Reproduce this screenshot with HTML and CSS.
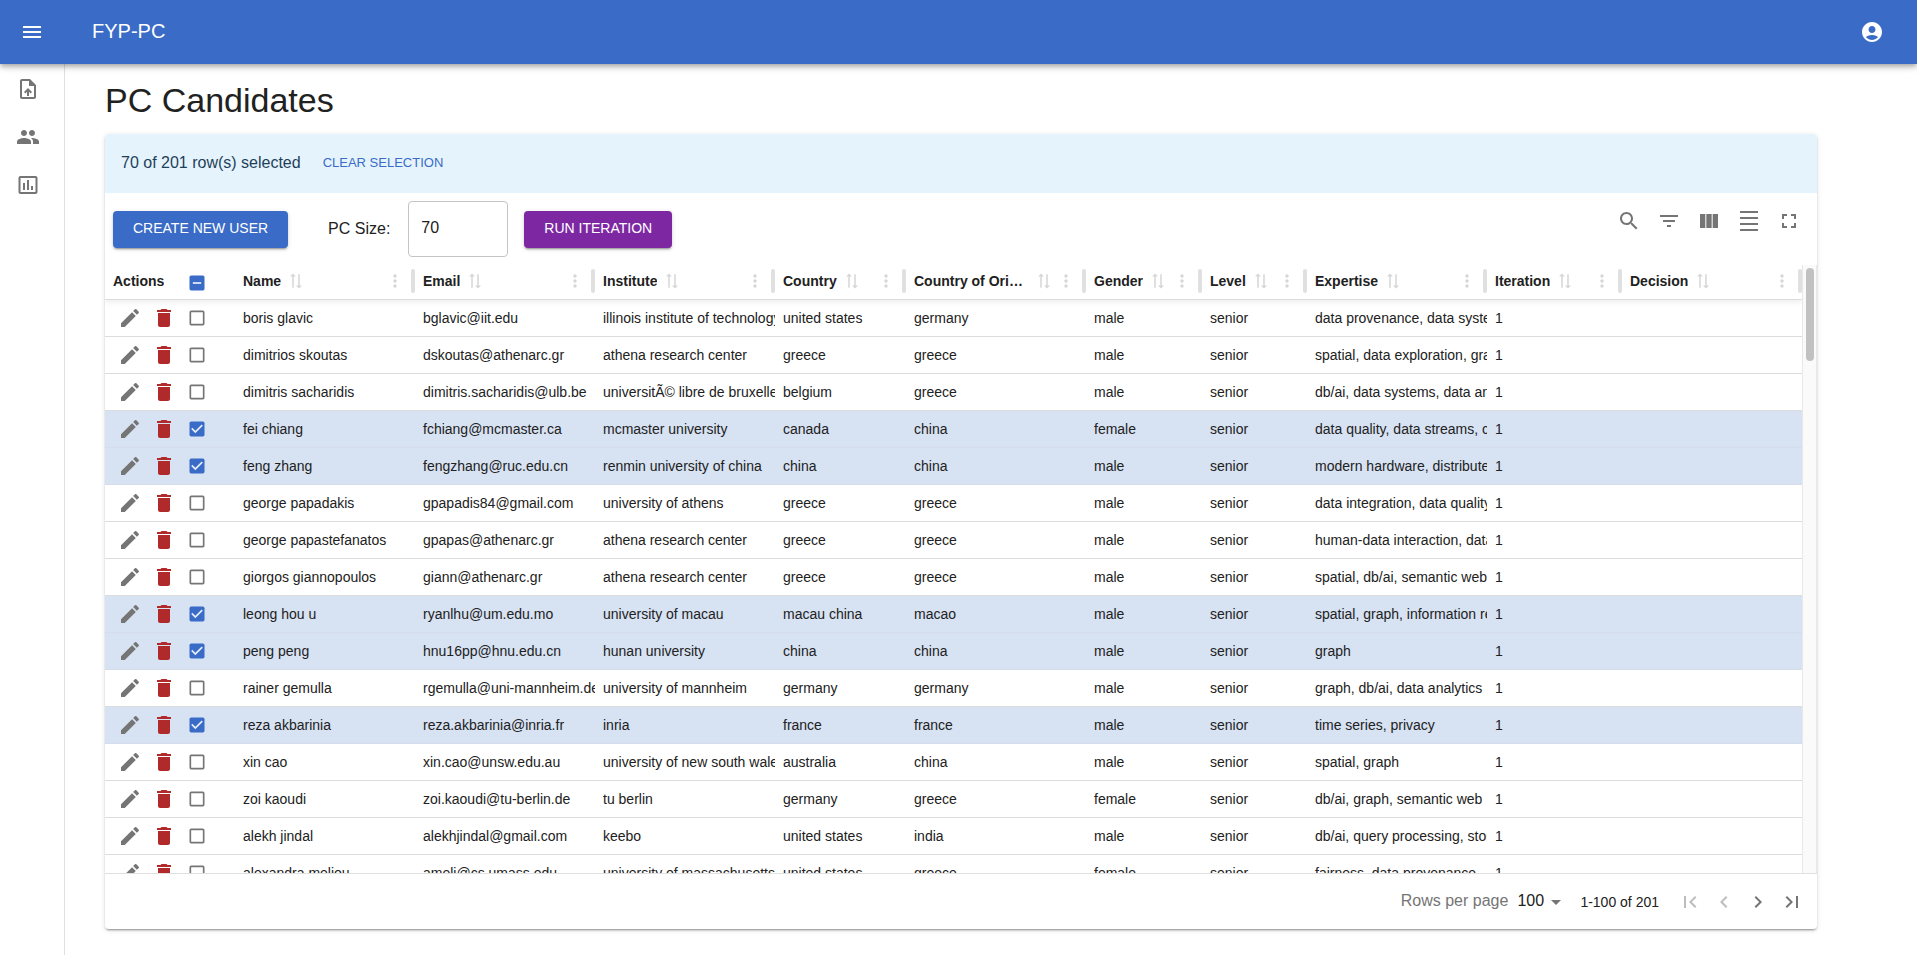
FILE: index.html
```html
<!DOCTYPE html>
<html lang="en">
<head>
<meta charset="utf-8">
<title>FYP-PC</title>
<link rel="stylesheet" href="styles.css">
</head>
<body>
<svg class="sprite" aria-hidden="true">
  <symbol id="menu" viewBox="0 0 24 24"><path d="M3 18h18v-2H3v2zm0-5h18v-2H3v2zm0-7v2h18V6H3z"/></symbol>
  <symbol id="account" viewBox="0 0 24 24"><path d="M12 2C6.48 2 2 6.48 2 12s4.48 10 10 10 10-4.48 10-10S17.52 2 12 2zm0 4c1.93 0 3.5 1.57 3.5 3.5S13.93 13 12 13s-3.5-1.57-3.5-3.5S10.07 6 12 6zm0 14c-2.03 0-4.43-.82-6.14-2.88C7.55 15.8 9.68 15 12 15s4.45.8 6.14 2.12C16.43 19.18 14.03 20 12 20z"/></symbol>
  <symbol id="upload" viewBox="0 0 24 24"><path d="M14 2H6c-1.1 0-1.99.9-1.99 2L4 20c0 1.1.89 2 1.99 2H18c1.1 0 2-.9 2-2V8l-6-6zm4 18H6V4h7v5h5v11zM8 15.01l1.41 1.41L11 14.84V19h2v-4.16l1.59 1.59L16 15.01 12.01 11 8 15.01z"/></symbol>
  <symbol id="people" viewBox="0 0 24 24"><path d="M16 11c1.66 0 2.99-1.34 2.99-3S17.66 5 16 5s-3 1.34-3 3 1.34 3 3 3zm-8 0c1.66 0 2.99-1.34 2.99-3S9.66 5 8 5 5 6.34 5 8s1.34 3 3 3zm0 2c-2.33 0-7 1.17-7 3.5V19h14v-2.500c0-2.330-4.670-3.500-7-3.500zm8 0c-.29 0-.62.02-.97.05 1.160.84 1.970 1.970 1.970 3.450V19h6v-2.500c0-2.330-4.670-3.500-7-3.500z"/></symbol>
  <symbol id="chart" viewBox="0 0 24 24"><path d="M9 17H7v-7h2v7zm4 0h-2V7h2v10zm4 0h-2v-4h2v4zm2.500 2.100h-15V5h15v14.100zm0-16.100h-15c-1.100 0-2 .9-2 2v14c0 1.100.9 2 2 2h15c1.100 0 2-.9 2-2V5c0-1.100-.9-2-2-2z"/></symbol>
  <symbol id="search" viewBox="0 0 24 24"><path d="M15.500 14h-.79l-.28-.27C15.410 12.590 16 11.110 16 9.500 16 5.910 13.090 3 9.500 3S3 5.910 3 9.500 5.910 16 9.500 16c1.610 0 3.090-.59 4.230-1.570l.27.28v.79l5 4.990L20.490 19l-4.990-5zm-6 0C7.010 14 5 11.990 5 9.500S7.010 5 9.500 5 14 7.010 14 9.500 11.990 14 9.500 14z"/></symbol>
  <symbol id="filter" viewBox="0 0 24 24"><path d="M10 18h4v-2h-4v2zM3 6v2h18V6H3zm3 7h12v-2H6v2z"/></symbol>
  <symbol id="columns" viewBox="0 0 24 24"><path d="M14.670 5v14H9.330V5h5.340zm1 14H21V5h-5.330v14zm-7.340 0V5H3v14h5.330z"/></symbol>
  <symbol id="density" viewBox="0 0 24 24"><path d="M3 2h18v2H3zM3 20h18v2H3zM3 14h18v2H3zM3 8h18v2H3z"/></symbol>
  <symbol id="fullscreen" viewBox="0 0 24 24"><path d="M7 14H5v5h5v-2H7v-3zm-2-4h2V7h3V5H5v5zm12 7h-3v2h5v-5h-2v3zM14 5v2h3v3h2V5h-5z"/></symbol>
  <symbol id="edit" viewBox="0 0 24 24"><path d="M3 17.250V21h3.750L17.810 9.940l-3.750-3.750L3 17.250zM20.710 7.040c.39-.39.39-1.020 0-1.410l-2.340-2.340c-.39-.39-1.020-.39-1.410 0l-1.830 1.830 3.750 3.750 1.830-1.830z"/></symbol>
  <symbol id="trash" viewBox="0 0 24 24"><path d="M6 19c0 1.100.9 2 2 2h8c1.100 0 2-.9 2-2V7H6v12zM19 4h-3.500l-1-1h-5l-1 1H5v2h14V4z"/></symbol>
  <symbol id="sort" viewBox="0 0 24 24"><path transform="rotate(-90 12 12)" d="M18 12l4-4-4-4v3H3v2h15v3zM6 12l-4 4 4 4v-3h15v-2H6v-3z"/></symbol>
  <symbol id="more" viewBox="0 0 24 24"><path d="M12 8c1.100 0 2-.9 2-2s-.9-2-2-2-2 .9-2 2 .9 2 2 2zm0 2c-1.100 0-2 .9-2 2s.9 2 2 2 2-.9 2-2-.9-2-2-2zm0 6c-1.100 0-2 .9-2 2s.9 2 2 2 2-.9 2-2-.9-2-2-2z"/></symbol>
  <symbol id="first" viewBox="0 0 24 24"><path d="M18.410 16.590L13.820 12l4.590-4.590L17 6l-6 6 6 6zM6 6h2v12H6z"/></symbol>
  <symbol id="prev" viewBox="0 0 24 24"><path d="M15.410 7.410L14 6l-6 6 6 6 1.410-1.410L10.830 12z"/></symbol>
  <symbol id="next" viewBox="0 0 24 24"><path d="M10 6L8.590 7.410 13.170 12l-4.580 4.590L10 18l6-6z"/></symbol>
  <symbol id="last" viewBox="0 0 24 24"><path d="M5.590 7.410L10.180 12l-4.590 4.590L7 18l6-6-6-6zM16 6h2v12h-2z"/></symbol>
</svg>

<header class="appbar">
  <button class="icon-btn" aria-label="Open menu"><svg><use href="#menu"/></svg></button>
  <span class="brand">FYP-PC</span>
  <button class="icon-btn account" aria-label="Account"><svg><use href="#account"/></svg></button>
</header>

<div class="shell">
  <nav class="rail" aria-label="Main">
    <a href="#upload-file" aria-label="Upload file"><svg><use href="#upload"/></svg></a>
    <a href="#candidates" aria-label="Candidates"><svg><use href="#people"/></svg></a>
    <a href="#statistics" aria-label="Statistics"><svg><use href="#chart"/></svg></a>
  </nav>

  <main class="content">
    <h1>PC Candidates</h1>
    <section class="card">
      <div class="alert">
        <span>70 of 201 row(s) selected</span>
        <button class="text-btn">CLEAR SELECTION</button>
      </div>

      <div class="toolbar">
        <button class="btn primary">CREATE NEW USER</button>
        <label for="pc-size">PC Size:</label>
        <input class="size-input" id="pc-size" type="text" value="70">
        <button class="btn secondary">RUN ITERATION</button>
        <div class="tools">
          <button class="icon-btn" aria-label="Search"><svg><use href="#search"/></svg></button>
          <button class="icon-btn" aria-label="Filters"><svg><use href="#filter"/></svg></button>
          <button class="icon-btn" aria-label="Columns"><svg><use href="#columns"/></svg></button>
          <button class="icon-btn" aria-label="Density"><svg><use href="#density"/></svg></button>
          <button class="icon-btn" aria-label="Full screen"><svg><use href="#fullscreen"/></svg></button>
        </div>
      </div>

      <div class="table-area">
        <div class="table-scroll">
          <table>
            <colgroup>
              <col class="c-actions"><col class="c-select"><col class="c-wide"><col class="c-wide"><col class="c-wide"><col class="c-country"><col class="c-wide"><col class="c-gender"><col class="c-level"><col class="c-wide"><col class="c-iteration"><col class="c-wide">
            </colgroup>
            <thead>
              <tr>
                <th><div class="head"><span class="label">Actions</span></div></th>
                <th><div class="head select-all"><input type="checkbox" class="mixed" aria-label="Select all"></div></th>
                <th><div class="head"><span class="label">Name</span><svg class="sort"><use href="#sort"/></svg><button aria-label="Name options"><svg><use href="#more"/></svg></button><i></i></div></th>
                <th><div class="head"><span class="label">Email</span><svg class="sort"><use href="#sort"/></svg><button aria-label="Email options"><svg><use href="#more"/></svg></button><i></i></div></th>
                <th><div class="head"><span class="label">Institute</span><svg class="sort"><use href="#sort"/></svg><button aria-label="Institute options"><svg><use href="#more"/></svg></button><i></i></div></th>
                <th><div class="head"><span class="label">Country</span><svg class="sort"><use href="#sort"/></svg><button aria-label="Country options"><svg><use href="#more"/></svg></button><i></i></div></th>
                <th><div class="head"><span class="label">Country of Origin</span><svg class="sort"><use href="#sort"/></svg><button aria-label="Country of Origin options"><svg><use href="#more"/></svg></button><i></i></div></th>
                <th><div class="head"><span class="label">Gender</span><svg class="sort"><use href="#sort"/></svg><button aria-label="Gender options"><svg><use href="#more"/></svg></button><i></i></div></th>
                <th><div class="head"><span class="label">Level</span><svg class="sort"><use href="#sort"/></svg><button aria-label="Level options"><svg><use href="#more"/></svg></button><i></i></div></th>
                <th><div class="head"><span class="label">Expertise</span><svg class="sort"><use href="#sort"/></svg><button aria-label="Expertise options"><svg><use href="#more"/></svg></button><i></i></div></th>
                <th><div class="head"><span class="label">Iteration</span><svg class="sort"><use href="#sort"/></svg><button aria-label="Iteration options"><svg><use href="#more"/></svg></button><i></i></div></th>
                <th><div class="head"><span class="label">Decision</span><svg class="sort"><use href="#sort"/></svg><button aria-label="Decision options"><svg><use href="#more"/></svg></button><i></i></div></th>
              </tr>
            </thead>
            <tbody>
              <tr><td><div class="actions"><button aria-label="Edit"><svg><use href="#edit"/></svg></button><button class="delete" aria-label="Delete"><svg><use href="#trash"/></svg></button></div></td><td><input type="checkbox" aria-label="Select boris glavic"></td><td>boris glavic</td><td>bglavic@iit.edu</td><td>illinois institute of technology</td><td>united states</td><td>germany</td><td>male</td><td>senior</td><td>data provenance, data systems</td><td>1</td><td></td></tr>
              <tr><td><div class="actions"><button aria-label="Edit"><svg><use href="#edit"/></svg></button><button class="delete" aria-label="Delete"><svg><use href="#trash"/></svg></button></div></td><td><input type="checkbox" aria-label="Select dimitrios skoutas"></td><td>dimitrios skoutas</td><td>dskoutas@athenarc.gr</td><td>athena research center</td><td>greece</td><td>greece</td><td>male</td><td>senior</td><td>spatial, data exploration, graph</td><td>1</td><td></td></tr>
              <tr><td><div class="actions"><button aria-label="Edit"><svg><use href="#edit"/></svg></button><button class="delete" aria-label="Delete"><svg><use href="#trash"/></svg></button></div></td><td><input type="checkbox" aria-label="Select dimitris sacharidis"></td><td>dimitris sacharidis</td><td>dimitris.sacharidis@ulb.be</td><td>universitÃ© libre de bruxelles</td><td>belgium</td><td>greece</td><td>male</td><td>senior</td><td>db/ai, data systems, data analytics</td><td>1</td><td></td></tr>
              <tr class="selected"><td><div class="actions"><button aria-label="Edit"><svg><use href="#edit"/></svg></button><button class="delete" aria-label="Delete"><svg><use href="#trash"/></svg></button></div></td><td><input type="checkbox" checked aria-label="Select fei chiang"></td><td>fei chiang</td><td>fchiang@mcmaster.ca</td><td>mcmaster university</td><td>canada</td><td>china</td><td>female</td><td>senior</td><td>data quality, data streams, cleaning</td><td>1</td><td></td></tr>
              <tr class="selected"><td><div class="actions"><button aria-label="Edit"><svg><use href="#edit"/></svg></button><button class="delete" aria-label="Delete"><svg><use href="#trash"/></svg></button></div></td><td><input type="checkbox" checked aria-label="Select feng zhang"></td><td>feng zhang</td><td>fengzhang@ruc.edu.cn</td><td>renmin university of china</td><td>china</td><td>china</td><td>male</td><td>senior</td><td>modern hardware, distributed</td><td>1</td><td></td></tr>
              <tr><td><div class="actions"><button aria-label="Edit"><svg><use href="#edit"/></svg></button><button class="delete" aria-label="Delete"><svg><use href="#trash"/></svg></button></div></td><td><input type="checkbox" aria-label="Select george papadakis"></td><td>george papadakis</td><td>gpapadis84@gmail.com</td><td>university of athens</td><td>greece</td><td>greece</td><td>male</td><td>senior</td><td>data integration, data quality</td><td>1</td><td></td></tr>
              <tr><td><div class="actions"><button aria-label="Edit"><svg><use href="#edit"/></svg></button><button class="delete" aria-label="Delete"><svg><use href="#trash"/></svg></button></div></td><td><input type="checkbox" aria-label="Select george papastefanatos"></td><td>george papastefanatos</td><td>gpapas@athenarc.gr</td><td>athena research center</td><td>greece</td><td>greece</td><td>male</td><td>senior</td><td>human-data interaction, data</td><td>1</td><td></td></tr>
              <tr><td><div class="actions"><button aria-label="Edit"><svg><use href="#edit"/></svg></button><button class="delete" aria-label="Delete"><svg><use href="#trash"/></svg></button></div></td><td><input type="checkbox" aria-label="Select giorgos giannopoulos"></td><td>giorgos giannopoulos</td><td>giann@athenarc.gr</td><td>athena research center</td><td>greece</td><td>greece</td><td>male</td><td>senior</td><td>spatial, db/ai, semantic web</td><td>1</td><td></td></tr>
              <tr class="selected"><td><div class="actions"><button aria-label="Edit"><svg><use href="#edit"/></svg></button><button class="delete" aria-label="Delete"><svg><use href="#trash"/></svg></button></div></td><td><input type="checkbox" checked aria-label="Select leong hou u"></td><td>leong hou u</td><td>ryanlhu@um.edu.mo</td><td>university of macau</td><td>macau china</td><td>macao</td><td>male</td><td>senior</td><td>spatial, graph, information retrieval</td><td>1</td><td></td></tr>
              <tr class="selected"><td><div class="actions"><button aria-label="Edit"><svg><use href="#edit"/></svg></button><button class="delete" aria-label="Delete"><svg><use href="#trash"/></svg></button></div></td><td><input type="checkbox" checked aria-label="Select peng peng"></td><td>peng peng</td><td>hnu16pp@hnu.edu.cn</td><td>hunan university</td><td>china</td><td>china</td><td>male</td><td>senior</td><td>graph</td><td>1</td><td></td></tr>
              <tr><td><div class="actions"><button aria-label="Edit"><svg><use href="#edit"/></svg></button><button class="delete" aria-label="Delete"><svg><use href="#trash"/></svg></button></div></td><td><input type="checkbox" aria-label="Select rainer gemulla"></td><td>rainer gemulla</td><td>rgemulla@uni-mannheim.de</td><td>university of mannheim</td><td>germany</td><td>germany</td><td>male</td><td>senior</td><td>graph, db/ai, data analytics</td><td>1</td><td></td></tr>
              <tr class="selected"><td><div class="actions"><button aria-label="Edit"><svg><use href="#edit"/></svg></button><button class="delete" aria-label="Delete"><svg><use href="#trash"/></svg></button></div></td><td><input type="checkbox" checked aria-label="Select reza akbarinia"></td><td>reza akbarinia</td><td>reza.akbarinia@inria.fr</td><td>inria</td><td>france</td><td>france</td><td>male</td><td>senior</td><td>time series, privacy</td><td>1</td><td></td></tr>
              <tr><td><div class="actions"><button aria-label="Edit"><svg><use href="#edit"/></svg></button><button class="delete" aria-label="Delete"><svg><use href="#trash"/></svg></button></div></td><td><input type="checkbox" aria-label="Select xin cao"></td><td>xin cao</td><td>xin.cao@unsw.edu.au</td><td>university of new south wales</td><td>australia</td><td>china</td><td>male</td><td>senior</td><td>spatial, graph</td><td>1</td><td></td></tr>
              <tr><td><div class="actions"><button aria-label="Edit"><svg><use href="#edit"/></svg></button><button class="delete" aria-label="Delete"><svg><use href="#trash"/></svg></button></div></td><td><input type="checkbox" aria-label="Select zoi kaoudi"></td><td>zoi kaoudi</td><td>zoi.kaoudi@tu-berlin.de</td><td>tu berlin</td><td>germany</td><td>greece</td><td>female</td><td>senior</td><td>db/ai, graph, semantic web</td><td>1</td><td></td></tr>
              <tr><td><div class="actions"><button aria-label="Edit"><svg><use href="#edit"/></svg></button><button class="delete" aria-label="Delete"><svg><use href="#trash"/></svg></button></div></td><td><input type="checkbox" aria-label="Select alekh jindal"></td><td>alekh jindal</td><td>alekhjindal@gmail.com</td><td>keebo</td><td>united states</td><td>india</td><td>male</td><td>senior</td><td>db/ai, query processing, storage</td><td>1</td><td></td></tr>
              <tr><td><div class="actions"><button aria-label="Edit"><svg><use href="#edit"/></svg></button><button class="delete" aria-label="Delete"><svg><use href="#trash"/></svg></button></div></td><td><input type="checkbox" aria-label="Select alexandra meliou"></td><td>alexandra meliou</td><td>ameli@cs.umass.edu</td><td>university of massachusetts</td><td>united states</td><td>greece</td><td>female</td><td>senior</td><td>fairness, data provenance,</td><td>1</td><td></td></tr>
            </tbody>
          </table>
        </div>
        <div class="scrollbar" aria-hidden="true"><span></span></div>
      </div>

      <footer class="pager">
        <label for="page-size">Rows per page</label>
        <select id="page-size"><option>100</option><option>50</option><option>25</option></select>
        <span class="range">1-100 of 201</span>
        <div class="pages">
          <button disabled aria-label="First page"><svg><use href="#first"/></svg></button>
          <button disabled aria-label="Previous page"><svg><use href="#prev"/></svg></button>
          <button aria-label="Next page"><svg><use href="#next"/></svg></button>
          <button aria-label="Last page"><svg><use href="#last"/></svg></button>
        </div>
      </footer>
    </section>
  </main>
</div>
</body>
</html>
```
FILE: styles.css
```css
:root {
  --primary: #396bc7;
  --secondary: #7d28a2;
  --text: #212121;
  --muted: #757575;
  --line: #dcdcdc;
}

* { box-sizing: border-box; }

body {
  margin: 0;
  height: 100vh;
  display: flex;
  flex-direction: column;
  background: #fff;
  color: var(--text);
  font: 16px/24px "Liberation Sans", Arial, sans-serif;
}

button, input, select { font: inherit; color: inherit; margin: 0; }
button { border: 0; padding: 0; background: none; cursor: pointer; }
svg { display: block; width: 24px; height: 24px; fill: currentColor; flex: none; }
.sprite { display: none; }

/* App bar */
.appbar {
  position: relative;
  z-index: 2;
  flex: none;
  height: 64px;
  padding: 0 33px 0 20px;
  display: flex;
  align-items: center;
  color: #fff;
  background: var(--primary);
  box-shadow: 0 2px 4px -1px rgba(0,0,0,.2), 0 4px 5px rgba(0,0,0,.14), 0 1px 10px rgba(0,0,0,.12);
}
.brand { margin-left: 48px; padding-bottom: 2px; font-size: 20px; }
.account { margin-left: auto; }

.shell { flex: 1; min-height: 0; display: flex; }

.rail {
  flex: none;
  width: 65px;
  padding-top: 1px;
  border-right: 1px solid #e0e0e0;
  display: flex;
  flex-direction: column;
}
.rail a { display: flex; padding: 12px 16px; color: var(--muted); }

.content {
  flex: 1;
  min-width: 0;
  display: flex;
  flex-direction: column;
  padding: 15px 100px 26px 40px;
}
h1 { margin: 0 0 13px; font-size: 34px; line-height: 42px; font-weight: 400; }

.card {
  flex: 1;
  min-height: 0;
  display: flex;
  flex-direction: column;
  overflow: hidden;
  border-radius: 4px;
  box-shadow: 0 3px 1px -2px rgba(0,0,0,.2), 0 2px 2px rgba(0,0,0,.14), 0 1px 5px rgba(0,0,0,.12);
}

.alert {
  flex: none;
  height: 59px;
  padding: 0 16px 2px;
  display: flex;
  align-items: center;
  gap: 22px;
  background: #e5f4fc;
  color: #1f405a;
}
.text-btn { color: var(--primary); font-size: 13px; }

/* Toolbar */
.toolbar { flex: none; height: 72px; padding: 8px; display: flex; align-items: center; }
.btn {
  height: 37px;
  padding: 0 20px 2px;
  border-radius: 4px;
  color: #fff;
  font-size: 14px;
  box-shadow: 0 3px 1px -2px rgba(0,0,0,.2), 0 2px 2px rgba(0,0,0,.14), 0 1px 5px rgba(0,0,0,.12);
}
.primary { background: var(--primary); }
.secondary { background: var(--secondary); }
.toolbar label { margin: 0 18px 0 40px; }
.size-input {
  width: 100px;
  height: 56px;
  margin-right: 16px;
  padding: 0 12px 2px;
  border: 1px solid #c4c4c4;
  border-radius: 4px;
  background: #fff;
}
.tools { margin: 0 8px 16px auto; display: flex; gap: 16px; color: var(--muted); }

/* Table */
.table-area { flex: 1; min-height: 0; display: flex; }
.table-scroll { flex: 1; min-width: 0; overflow: hidden; }
table { width: 100%; table-layout: fixed; border-collapse: separate; border-spacing: 0; font-size: 14px; line-height: 20px; }
.c-actions { width: 74px; }
.c-select { width: 56px; }
.c-wide { width: 180px; }
.c-country { width: 131px; }
.c-gender { width: 116px; }
.c-level { width: 105px; }
.c-iteration { width: 135px; }

thead { position: relative; box-shadow: 0 2px 6px rgba(0,0,0,.08); }
th { height: 35px; padding: 0 0 0 8px; text-align: left; background: #fff; border-bottom: 1px solid var(--line); }
.head { height: 34px; padding-bottom: 2px; display: flex; align-items: center; }
.head .label { min-width: 0; overflow: hidden; white-space: nowrap; text-overflow: ellipsis; }
.head .sort { width: 18px; height: 18px; margin: 0 3px 0 6px; color: #d6d6d6; }
.head button { margin-left: auto; color: #d6d6d6; }
.head button svg { width: 20px; height: 20px; }
.head i { flex: none; width: 4px; height: 24px; margin-left: 6px; border-radius: 2px; background: #e0e0e0; }
.head.select-all { padding: 2px 0 0; }

td {
  height: 37px;
  padding: 0 0 0 8px;
  overflow: hidden;
  white-space: nowrap;
  text-overflow: clip;
  border-bottom: 1px solid var(--line);
}
.selected td { background: #d7e2f3; border-bottom-color: #d6dcea; }
.actions { display: flex; gap: 10px; padding-left: 5px; color: var(--muted); }
.delete { color: #b02a2c; }

input[type="checkbox"] {
  display: block;
  width: 20px;
  height: 20px;
  appearance: none;
  background: url("data:image/svg+xml,%3Csvg xmlns='http://www.w3.org/2000/svg' viewBox='0 0 24 24'%3E%3Cpath fill='%23757575' d='M19 5v14H5V5h14m0-2H5c-1.100 0-2 .9-2 2v14c0 1.100.9 2 2 2h14c1.100 0 2-.9 2-2V5c0-1.100-.9-2-2-2z'/%3E%3C/svg%3E") center / 20px no-repeat;
}
input[type="checkbox"]:checked {
  background-image: url("data:image/svg+xml,%3Csvg xmlns='http://www.w3.org/2000/svg' viewBox='0 0 24 24'%3E%3Cpath fill='%23396bc7' d='M5 3h14a2 2 0 0 1 2 2v14a2 2 0 0 1-2 2H5a2 2 0 0 1-2-2V5a2 2 0 0 1 2-2z'/%3E%3Cpath fill='%23e5ecf8' d='M10 17l-5-5 1.410-1.410L10 14.170l7.590-7.590L19 8l-9 9z'/%3E%3C/svg%3E");
}
input[type="checkbox"].mixed {
  background-image: url("data:image/svg+xml,%3Csvg xmlns='http://www.w3.org/2000/svg' viewBox='0 0 24 24'%3E%3Cpath fill='%23396bc7' d='M19 3H5c-1.100 0-2 .9-2 2v14c0 1.100.9 2 2 2h14c1.100 0 2-.9 2-2V5c0-1.100-.9-2-2-2zm-2 10H7v-2h10v2z'/%3E%3C/svg%3E");
}

.scrollbar {
  flex: none;
  width: 15px;
  padding: 3px 2px 3px 3px;
  background: #fafafa;
  border: solid #e8e8e8;
  border-width: 0 1px;
}
.scrollbar span { display: block; height: 93px; border-radius: 4px; background: #c1c1c1; }

/* Pager */
.pager {
  flex: none;
  height: 56px;
  padding: 0 8px;
  border-top: 1px solid #e0e0e0;
  display: flex;
  align-items: center;
  justify-content: flex-end;
}
.pager label { padding-bottom: 2px; color: var(--muted); }
.pager select {
  width: 51px;
  height: 28px;
  margin: 0 12px 0 9px;
  padding: 0 0 2px;
  border: 0;
  appearance: none;
  background: url("data:image/svg+xml,%3Csvg xmlns='http://www.w3.org/2000/svg' viewBox='0 0 24 24'%3E%3Cpath fill='%23757575' d='M7 10l5 5 5-5z'/%3E%3C/svg%3E") right center / 24px no-repeat;
}
.range { margin-right: 14px; font-size: 14px; }
.pages { display: flex; color: var(--muted); }
.pages button { padding: 5px; }
.pages button:disabled { color: #bdbdbd; }
```
